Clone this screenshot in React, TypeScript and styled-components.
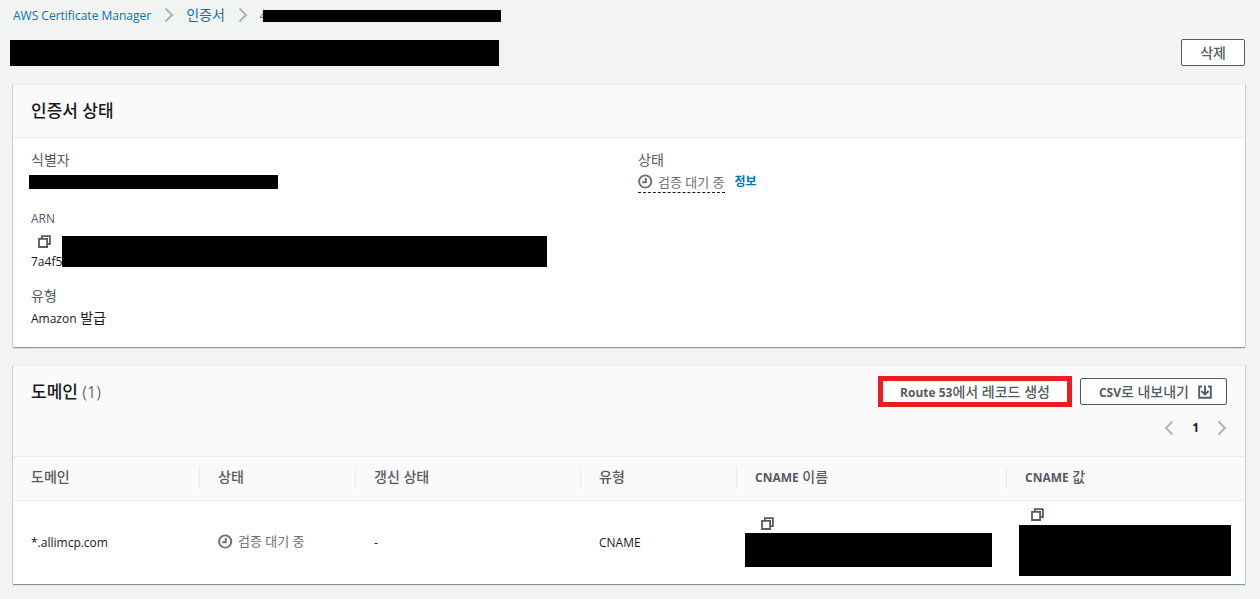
import React from "react";
import styled, { createGlobalStyle } from "styled-components";

const GlobalStyle = createGlobalStyle`
  * { box-sizing: border-box; }
  body {
    margin: 0;
    background: #f2f3f3;
    color: #16191f;
    font-family: "Open Sans", "Noto Sans CJK KR", sans-serif;
    font-size: 14px;
    line-height: 20px;
  }
  button { font-family: inherit; cursor: pointer; }
`;

const Page = styled.main`
  padding: 5px 15px 14px 13px;
`;

const Latin = styled.span<{ $bold?: boolean }>`
  font-size: 12px;
  font-weight: ${(p) => (p.$bold ? 700 : "inherit")};
  line-height: 16px;
`;

const Breadcrumbs = styled.nav`
  ol {
    display: flex;
    align-items: center;
    gap: 12px;
    height: 20px;
    margin: 0;
    padding: 0;
    list-style: none;
  }
  li {
    display: flex;
    align-items: center;
    gap: 13px;
  }
`;

const Link = styled.a`
  color: #0073bb;
  text-decoration: none;
`;

const InfoLink = styled(Link)`
  font-size: 12px;
  font-weight: 700;
`;

const Covered = styled.span`
  position: relative;
  display: block;
  line-height: 18px;
  color: ${(p: { $muted?: boolean }) => (p.$muted ? "#687078" : "inherit")};
`;

const Redaction = styled.span<{ $w: number; $h: number }>`
  display: block;
  width: ${(p) => p.$w}px;
  max-width: 100%;
  height: ${(p) => p.$h}px;
  background: #000;
`;

const Overlay = styled(Redaction)<{ $left: number; $top: number }>`
  position: absolute;
  max-width: none;
  left: ${(p) => p.$left}px;
  top: ${(p) => p.$top}px;
`;

const TitleBar = styled.header`
  display: flex;
  justify-content: space-between;
  align-items: flex-end;
  margin: 14px 0 18px -3px;
`;

const Title = styled.h1`
  margin: 0;
`;

const Button = styled.button<{ $highlight?: boolean; $icon?: boolean }>`
  display: inline-flex;
  align-items: center;
  justify-content: center;
  gap: 9px;
  height: ${(p) => (p.$highlight ? 31 : 27)}px;
  padding: 0 ${(p) => (p.$highlight ? 17 : p.$icon ? 14 : 18)}px 0 ${(p) => (p.$highlight ? 17 : 18)}px;
  border: ${(p) => (p.$highlight ? "5px solid #ed1c24" : "1px solid #545b64")};
  border-radius: ${(p) => (p.$highlight ? 0 : 2)}px;
  background: #fff;
  color: #545b64;
  font-size: 14px;
  font-weight: 500;
  line-height: 20px;
`;

const Panel = styled.section`
  margin-bottom: 18px;
  background: #fff;
  border-top: 1px solid #eaeded;
  box-shadow: 0 1px 1px 0 #879596, 1px 0 0 0 #d5dbdb, -1px 0 0 0 #d5dbdb;
`;

const PanelHeader = styled.div`
  padding: 16px 18px;
  background: #fafafa;
  border-bottom: 1px solid #eaeded;
`;

const DomainHeader = styled(PanelHeader)`
  padding: 10px 18px 18px;
`;

const HeaderRow = styled.div`
  display: flex;
  align-items: center;
  justify-content: space-between;
`;

const Actions = styled.div`
  display: flex;
  align-items: center;
  gap: 8px;
`;

const Heading = styled.h2`
  margin: 0;
  font-size: 17px;
  font-weight: 500;
  line-height: 20px;
`;

const Count = styled.span`
  color: #687078;
  font-size: 16px;
  font-weight: 400;
`;

const Details = styled.div`
  display: grid;
  grid-template-columns: 1fr 1fr;
  gap: 18px;
  padding: 12px 18px 19px;
`;

const Fields = styled.dl`
  display: flex;
  flex-direction: column;
  gap: 16px;
  margin: 0;
`;

const Field = styled.div`
  dt {
    color: #545b64;
  }
  dd {
    margin: 2px 0 0;
  }
`;

const ValueLine = styled.div`
  display: flex;
  align-items: center;
  gap: 10px;
  height: 20px;
`;

const IdValue = styled(ValueLine)`
  margin-left: -2px;
`;

const Status = styled.span<{ $dashed?: boolean }>`
  display: inline-flex;
  align-items: center;
  gap: 5px;
  color: #687078;
  font-size: 13px;
  ${(p) => p.$dashed && "height: 21px; border-bottom: 1px dashed #16191f;"}
`;

const CopyButton = styled.button`
  display: flex;
  align-items: center;
  height: ${(p: { $h?: number }) => p.$h ?? 12}px;
  padding: 0;
  border: 0;
  background: none;
  color: #545b64;
`;

const ArnCopy = styled(CopyButton)`
  margin-left: 7px;
`;

const Pagination = styled.nav`
  display: flex;
  justify-content: flex-end;
  align-items: center;
  gap: 18px;
  height: 20px;
  margin-top: 11px;
  font-size: 12px;
  font-weight: 700;
`;

const PageButton = styled.button`
  display: flex;
  padding: 0;
  border: 0;
  background: none;
  color: #aab7b8;
`;

const Table = styled.table`
  width: 100%;
  table-layout: fixed;
  border-collapse: collapse;
  th {
    height: 43px;
    padding: 0;
    background: #fafafa;
    border-bottom: 1px solid #eaeded;
    color: #545b64;
    font-weight: 500;
    text-align: left;
  }
  th > div {
    height: 22px;
    padding-left: 18px;
    border-right: 1px solid #eaeded;
  }
  th:last-child > div {
    border-right: 0;
  }
  td {
    height: 84px;
    padding: 0 0 0 18px;
    vertical-align: middle;
  }
`;

const Col = styled.col<{ $w?: number }>`
  width: ${(p) => (p.$w ? `${p.$w}px` : "auto")};
`;

const CopyCell = styled.td<{ $inset: number }>`
  && {
    padding: 0 14px 0 ${(p) => p.$inset}px;
  }
  ${CopyButton} {
    margin: 0 0 4px ${(p) => 24 - p.$inset}px;
  }
`;

const Chevron = ({ left }: { left?: boolean }) => (
  <svg width="10" height="16" viewBox="0 0 10 16" fill="none" stroke="#aab7b8" strokeWidth="2" aria-hidden="true">
    <path d={left ? "M8.5 1.5 2 8l6.5 6.5" : "M1.5 1.5 8 8l-6.5 6.5"} />
  </svg>
);

const CopyIcon = () => (
  <svg width="13" height="13" viewBox="0 0 13 13" fill="none" stroke="currentColor" strokeWidth="1.8" aria-hidden="true">
    <path d="M3.8 3.4V1.1h8.1v8.1H9.6" />
    <path d="M1 3.9h8.1V12H1z" />
  </svg>
);

const ClockIcon = () => (
  <svg width="15" height="15" viewBox="0 0 15 15" fill="none" stroke="#687078" strokeWidth="1.9" aria-hidden="true">
    <circle cx="7.2" cy="7.5" r="6.1" />
    <path d="M7.8 4v4.2H4.2" />
  </svg>
);

const DownloadIcon = () => (
  <svg width="14" height="14" viewBox="0 0 14 14" fill="none" stroke="currentColor" strokeWidth="1.9" aria-hidden="true">
    <path d="M4 1.5H1.2v11.3h11.6V1.5H10" />
    <path d="M7 .5v8.8M3.4 6 7 9.5 10.6 6" />
  </svg>
);

const columns = [
  { label: "도메인", width: 187 },
  { label: "상태", width: 156 },
  { label: "갱신 상태", width: 225 },
  { label: "유형", width: 156 },
  { latin: "CNAME", label: " 이름", width: 270 },
  { latin: "CNAME", label: " 값" },
];

export default function App() {
  return (
    <>
      <GlobalStyle />
      <Page>
        <Breadcrumbs aria-label="탐색 경로">
          <ol>
            <li>
              <Link href="#acm"><Latin>AWS Certificate Manager</Latin></Link>
              <Chevron />
            </li>
            <li>
              <Link href="#certificates">인증서</Link>
              <Chevron />
            </li>
            <li>
              <Covered $muted>
                <Latin>4</Latin>
                <Overlay $w={238} $h={12} $left={3} $top={4} />
              </Covered>
            </li>
          </ol>
        </Breadcrumbs>

        <TitleBar>
          <Title><Redaction $w={489} $h={26} /></Title>
          <Button type="button">삭제</Button>
        </TitleBar>

        <Panel>
          <PanelHeader>
            <Heading>인증서 상태</Heading>
          </PanelHeader>
          <Details>
            <Fields>
              <Field>
                <dt>식별자</dt>
                <dd><IdValue><Redaction $w={249} $h={14} /></IdValue></dd>
              </Field>
              <Field>
                <dt><Latin>ARN</Latin></dt>
                <dd>
                  <ArnCopy type="button" $h={22} aria-label="ARN 복사"><CopyIcon /></ArnCopy>
                  <Covered>
                    <Latin>7a4f5</Latin>
                    <Overlay $w={485} $h={31} $left={31} $top={-16} />
                  </Covered>
                </dd>
              </Field>
              <Field>
                <dt>유형</dt>
                <dd><Latin>Amazon</Latin> 발급</dd>
              </Field>
            </Fields>
            <Fields>
              <Field>
                <dt>상태</dt>
                <dd>
                  <ValueLine>
                    <Status $dashed><ClockIcon />검증 대기 중</Status>
                    <InfoLink href="#info">정보</InfoLink>
                  </ValueLine>
                </dd>
              </Field>
            </Fields>
          </Details>
        </Panel>

        <Panel>
          <DomainHeader>
            <HeaderRow>
              <Heading>도메인 <Count>(1)</Count></Heading>
              <Actions>
                <Button type="button" $highlight>
                  <span><Latin $bold>Route 53</Latin>에서 레코드 생성</span>
                </Button>
                <Button type="button" $icon>
                  <span><Latin $bold>CSV</Latin>로 내보내기</span>
                  <DownloadIcon />
                </Button>
              </Actions>
            </HeaderRow>
            <Pagination aria-label="페이지">
              <PageButton type="button" aria-label="이전 페이지"><Chevron left /></PageButton>
              <span>1</span>
              <PageButton type="button" aria-label="다음 페이지"><Chevron /></PageButton>
            </Pagination>
          </DomainHeader>
          <Table>
            <colgroup>
              {columns.map((c, i) => <Col key={i} $w={c.width} />)}
            </colgroup>
            <thead>
              <tr>
                {columns.map((c, i) => (
                  <th key={i} scope="col">
                    <div>{c.latin && <Latin $bold>{c.latin}</Latin>}{c.label}</div>
                  </th>
                ))}
              </tr>
            </thead>
            <tbody>
              <tr>
                <td><Latin>*.allimcp.com</Latin></td>
                <td><Status><ClockIcon />검증 대기 중</Status></td>
                <td><Latin>-</Latin></td>
                <td><Latin>CNAME</Latin></td>
                <CopyCell $inset={8}>
                  <CopyButton type="button" aria-label="CNAME 이름 복사"><CopyIcon /></CopyButton>
                  <Redaction $w={247} $h={34} />
                </CopyCell>
                <CopyCell $inset={12}>
                  <CopyButton type="button" aria-label="CNAME 값 복사"><CopyIcon /></CopyButton>
                  <Redaction $w={212} $h={51} />
                </CopyCell>
              </tr>
            </tbody>
          </Table>
        </Panel>
      </Page>
    </>
  );
}
